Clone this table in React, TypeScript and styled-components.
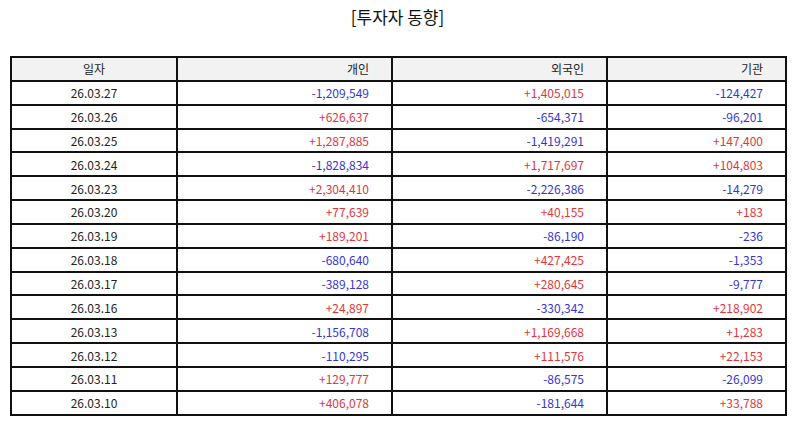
import { FC } from "react";
import styled, { createGlobalStyle } from "styled-components";

const GlobalStyle = createGlobalStyle`
  html, body {
    margin: 0;
    padding: 0;
    background: #ffffff;
  }
  body {
    font-family: "Noto Sans CJK KR", "Noto Sans", sans-serif;
    color: #222222;
  }
`;

const Page = styled.div`
  width: 794px;
  padding: 0 9px 0 10px;
  box-sizing: border-box;
`;

const Title = styled.h2`
  margin: 0;
  height: 56px;
  padding-top: 5px;
  box-sizing: border-box;
  text-align: center;
  font-size: 17px;
  font-weight: 400;
  line-height: 24px;
  color: #111111;
`;

const Table = styled.table`
  width: 775px;
  border-collapse: collapse;
  table-layout: fixed;
  font-size: 12px;
`;

const HeadCell = styled.th<{ $align?: "center" | "right" }>`
  height: 21.85px;
  padding: 0 22px 0 0;
  border: 2px solid #111;
  background: #f2f2f2;
  font-weight: 400;
  color: #222;
  text-align: ${(p) => p.$align ?? "right"};
  ${(p) => (p.$align === "center" ? "padding: 0;" : "")}
`;

const DateCell = styled.td`
  height: 21.85px;
  padding: 0;
  border: 2px solid #111;
  text-align: center;
  color: #222;
`;

const ValueCell = styled.td<{ $up: boolean }>`
  height: 21.85px;
  padding: 0 22px 0 0;
  border: 2px solid #111;
  text-align: right;
  color: ${(p) => (p.$up ? "#e2363c" : "#3535d2")};
`;

type Row = [string, string, string, string];

const rows: Row[] = [
  ["26.03.27", "-1,209,549", "+1,405,015", "-124,427"],
  ["26.03.26", "+626,637", "-654,371", "-96,201"],
  ["26.03.25", "+1,287,885", "-1,419,291", "+147,400"],
  ["26.03.24", "-1,828,834", "+1,717,697", "+104,803"],
  ["26.03.23", "+2,304,410", "-2,226,386", "-14,279"],
  ["26.03.20", "+77,639", "+40,155", "+183"],
  ["26.03.19", "+189,201", "-86,190", "-236"],
  ["26.03.18", "-680,640", "+427,425", "-1,353"],
  ["26.03.17", "-389,128", "+280,645", "-9,777"],
  ["26.03.16", "+24,897", "-330,342", "+218,902"],
  ["26.03.13", "-1,156,708", "+1,169,668", "+1,283"],
  ["26.03.12", "-110,295", "+111,576", "+22,153"],
  ["26.03.11", "+129,777", "-86,575", "-26,099"],
  ["26.03.10", "+406,078", "-181,644", "+33,788"],
];

const Value: FC<{ v: string }> = ({ v }) => (
  <ValueCell $up={v.startsWith("+")}>{v}</ValueCell>
);

export default function App() {
  return (
    <Page>
      <GlobalStyle />
      <Title>[투자자 동향]</Title>
      <Table>
        <colgroup>
          <col style={{ width: 166 }} />
          <col style={{ width: 215 }} />
          <col style={{ width: 215 }} />
          <col style={{ width: 179 }} />
        </colgroup>
        <thead>
          <tr>
            <HeadCell $align="center">일자</HeadCell>
            <HeadCell>개인</HeadCell>
            <HeadCell>외국인</HeadCell>
            <HeadCell>기관</HeadCell>
          </tr>
        </thead>
        <tbody>
          {rows.map(([d, a, b, c]) => (
            <tr key={d}>
              <DateCell>{d}</DateCell>
              <Value v={a} />
              <Value v={b} />
              <Value v={c} />
            </tr>
          ))}
        </tbody>
      </Table>
    </Page>
  );
}
